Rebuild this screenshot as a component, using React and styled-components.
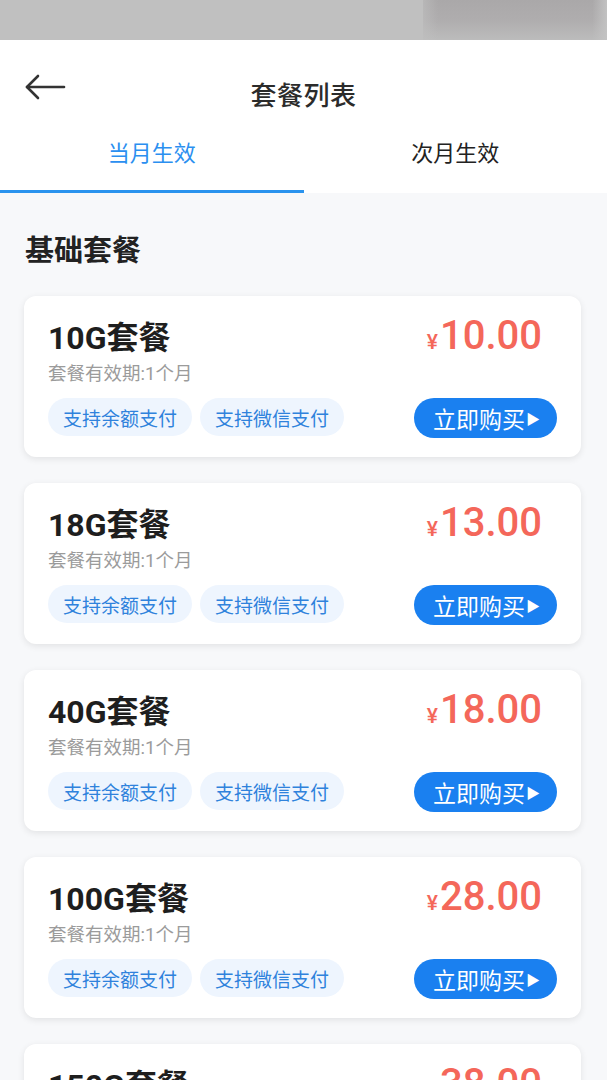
import React from "react";
import styled, { createGlobalStyle } from "styled-components";

const Global = createGlobalStyle`
  html, body { margin: 0; padding: 0; }
  body {
    width: 607px;
    height: 1080px;
    overflow: hidden;
    background: #f7f8fa;
    font-family: Roboto, "Noto Sans CJK SC", "Noto Sans", sans-serif;
    -webkit-font-smoothing: antialiased;
  }
  * { box-sizing: border-box; }
`;

const Page = styled.div`
  width: 607px;
  min-height: 1080px;
  background: #f7f8fa;
  display: flex;
  flex-direction: column;
`;

const StatusBar = styled.div`
  height: 40px;
  background: #c0c0c0;
  display: flex;
  justify-content: flex-end;
`;

const StatusBlur = styled.div`
  width: 184px;
  height: 100%;
  background:
    linear-gradient(90deg, rgba(192,192,192,0.6) 0%, rgba(192,192,192,0) 8%, rgba(192,192,192,0) 92%, rgba(196,196,196,0.9) 100%),
    linear-gradient(180deg, #aaa8a9 0%, #afadae 50%, #bcbcbc 100%);
`;

const Header = styled.header`
  background: #fff;
  display: flex;
  flex-direction: column;
`;

const NavRow = styled.div`
  height: 85px;
  display: grid;
  grid-template-columns: 90px 1fr 90px;
  align-items: center;
  padding-top: 22px;
`;

const BackButton = styled.div`
  padding-left: 24px;
  margin-top: -14px;
  display: flex;
  align-items: center;
`;

const Title = styled.h1`
  margin: 0;
  text-align: center;
  font-size: 26px;
  font-weight: 500;
  color: #2b2b2b;
  letter-spacing: 0.5px;
`;

const Tabs = styled.div`
  display: grid;
  grid-template-columns: 1fr 1fr;
`;

const Tab = styled.div`
  height: 68px;
  padding-top: 14px;
  text-align: center;
  font-size: 22px;
  line-height: 30px;
  color: ${(p) => (p.$active ? "#2b8ff0" : "#222")};
  border-bottom: 3px solid ${(p) => (p.$active ? "#2a93ee" : "transparent")};
`;

const Content = styled.main`
  padding: 38px 26px 0 24px;
  display: flex;
  flex-direction: column;
`;

const SectionTitle = styled.h2`
  margin: 0 0 25px 1px;
  font-size: 29px;
  line-height: 40px;
  font-weight: 700;
  color: #222;
`;

const CardList = styled.div`
  display: flex;
  flex-direction: column;
  gap: 26px;
`;

const Card = styled.div`
  background: #fff;
  border-radius: 12px;
  box-shadow: 0 2px 7px rgba(0, 0, 0, 0.09);
  height: 161px;
  padding: 22px 24px 19px 24px;
  display: flex;
  justify-content: space-between;
`;

const Left = styled.div`
  display: flex;
  flex-direction: column;
`;

const PlanName = styled.div`
  font-size: 32px;
  line-height: 40px;
  font-weight: 700;
  color: #1e1e1e;
`;

const Validity = styled.div`
  margin-top: 4px;
  font-size: 18.5px;
  line-height: 24px;
  color: #9b9b9b;
`;

const TagRow = styled.div`
  margin-top: 12px;
  display: flex;
  gap: 8px;
`;

const Tag = styled.span`
  height: 38px;
  padding: 0 15px;
  border-radius: 19px;
  background: #eef5fe;
  color: #2f82dc;
  font-size: 19px;
  display: inline-flex;
  align-items: center;
`;

const Right = styled.div`
  display: flex;
  flex-direction: column;
  align-items: flex-end;
  justify-content: space-between;
`;

const Price = styled.div`
  color: #f4675a;
  margin-right: 15px;
  display: flex;
  align-items: baseline;
  margin-top: -4px;
  font-weight: 500;
`;

const Yen = styled.span`
  font-size: 21px;
  margin-right: 2px;
`;

const Amount = styled.span`
  font-size: 40px;
  line-height: 44px;
`;

const BuyButton = styled.button`
  height: 40px;
  width: 143px;
  border: none;
  border-radius: 20px;
  background: #1a80f0;
  color: #fff;
  font-family: inherit;
  font-size: 23px;
  padding: 0 0 0 2px;
  display: flex;
  align-items: center;
  justify-content: center;
  gap: 1px;
`;

const Arrow = styled.span`
  font-size: 14px;
`;

const plans = [
  { name: "10G套餐", price: "10.00" },
  { name: "18G套餐", price: "13.00" },
  { name: "40G套餐", price: "18.00" },
  { name: "100G套餐", price: "28.00" },
  { name: "150G套餐", price: "38.00" },
];

function BackArrow() {
  return (
    <svg width="42" height="26" viewBox="0 0 42 26" fill="none">
      <path d="M3 13H40" stroke="#333" strokeWidth="2.6" strokeLinecap="round" />
      <path d="M14 2L3 13L14 24" stroke="#333" strokeWidth="2.6" strokeLinecap="round" strokeLinejoin="round" />
    </svg>
  );
}

export default function App() {
  return (
    <>
      <Global />
      <Page>
        <StatusBar>
          <StatusBlur />
        </StatusBar>
        <Header>
          <NavRow>
            <BackButton>
              <BackArrow />
            </BackButton>
            <Title>套餐列表</Title>
            <div />
          </NavRow>
          <Tabs>
            <Tab $active>当月生效</Tab>
            <Tab>次月生效</Tab>
          </Tabs>
        </Header>
        <Content>
          <SectionTitle>基础套餐</SectionTitle>
          <CardList>
            {plans.map((p) => (
              <Card key={p.name}>
                <Left>
                  <PlanName>{p.name}</PlanName>
                  <Validity>套餐有效期:1个月</Validity>
                  <TagRow>
                    <Tag>支持余额支付</Tag>
                    <Tag>支持微信支付</Tag>
                  </TagRow>
                </Left>
                <Right>
                  <Price>
                    <Yen>¥</Yen>
                    <Amount>{p.price}</Amount>
                  </Price>
                  <BuyButton>
                    立即购买<Arrow>▶</Arrow>
                  </BuyButton>
                </Right>
              </Card>
            ))}
          </CardList>
        </Content>
      </Page>
    </>
  );
}
